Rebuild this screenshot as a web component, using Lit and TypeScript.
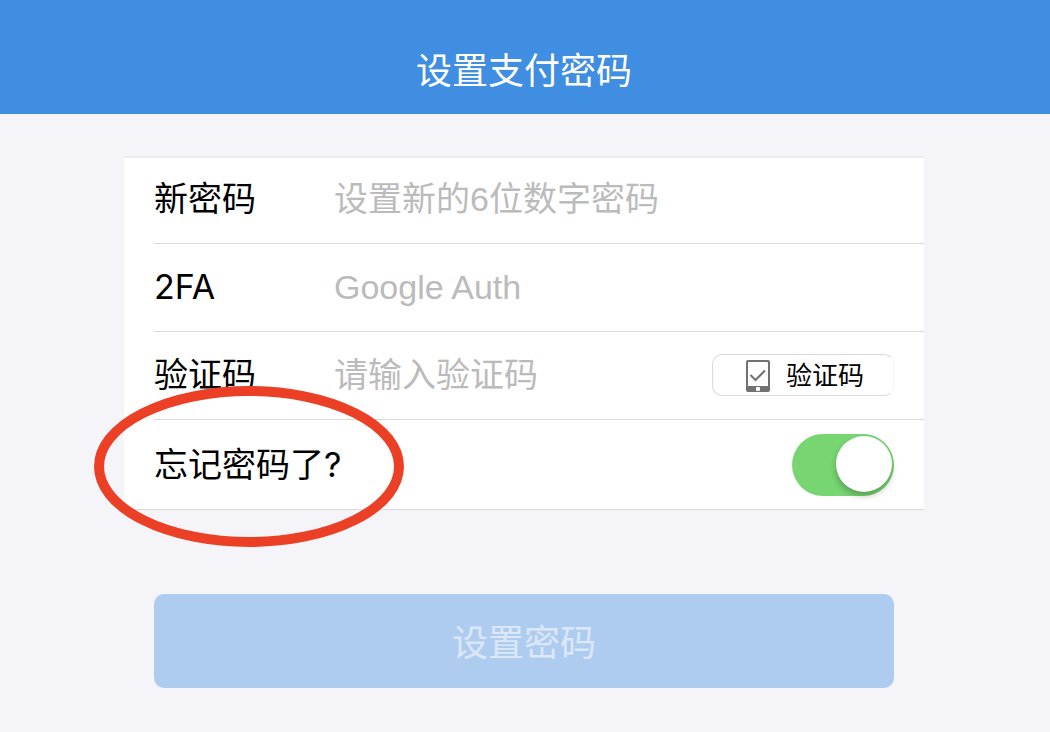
import { LitElement, html, css } from "lit";
import { customElement, state } from "lit/decorators.js";

@customElement("app-root")
export class AppRoot extends LitElement {
  @state() private forgot = true;

  static styles = css`
    :host {
      display: block;
      min-height: 100vh;
      background: #f4f4f9;
      color: #000;
      font-family: Inter, "Noto Sans CJK SC", sans-serif;
      font-size: 34px;
      line-height: 48px;
    }
    * {
      box-sizing: border-box;
    }
    .header {
      padding: 44px 2px 16px 0;
      background: #408ee1;
      color: #fff;
      text-align: center;
    }
    .title {
      margin: 0;
      font-size: 36px;
      font-weight: 400;
      line-height: 54px;
    }
    .page {
      padding: 42px 126px 44px 124px;
    }
    .card {
      border-top: 2px solid #ececee;
      border-bottom: 1px solid #d9d9d9;
      background: #fff;
    }
    .row {
      position: relative;
      display: flex;
      align-items: center;
      min-height: 88px;
      margin-left: 30px;
      padding: 0 30px 2px 0;
      border-bottom: 1px solid #d9d9d9;
    }
    .row:first-child {
      min-height: 86px;
      padding-bottom: 4px;
    }
    .row:last-child {
      justify-content: space-between;
      min-height: 89px;
      padding-bottom: 0;
      border-bottom: 0;
    }
    .label {
      flex: 0 0 180px;
    }
    .label.wide {
      flex: none;
    }
    .field {
      flex: 1;
      min-width: 0;
      height: 48px;
      padding: 0;
      border: 0;
      outline: 0;
      background: none;
      color: #000;
      font: 34px/48px "Liberation Sans", "Noto Sans CJK SC", sans-serif;
    }
    .field::placeholder {
      color: #bbb;
      opacity: 1;
    }
    .code {
      display: flex;
      align-items: center;
      justify-content: center;
      gap: 16px;
      width: 182px;
      height: 42px;
      padding: 2px 0 0 4px;
      border: 1px solid #d9d9d9;
      border-right-color: #f6f6f6;
      border-radius: 10px;
      background: #fff;
      color: #000;
      font: 26px/38px Inter, "Noto Sans CJK SC", sans-serif;
    }
    .switch {
      appearance: none;
      width: 102px;
      height: 62px;
      margin: 0;
      padding: 2px;
      border-radius: 31px;
      background: #ddd;
    }
    .switch:checked {
      background: #77d572;
    }
    .switch::before {
      content: "";
      display: block;
      width: 56px;
      height: 56px;
      border-radius: 50%;
      background: #fff;
      box-shadow: 0 4px 6px rgba(0, 0, 0, 0.25);
    }
    .switch:checked::before {
      margin-left: auto;
    }
    .ring {
      position: absolute;
      left: -60px;
      top: -34px;
      pointer-events: none;
    }
    .submit {
      display: block;
      width: calc(100% - 60px);
      height: 94px;
      margin: 84px 30px 0;
      padding: 4px 0 0;
      border: 0;
      border-radius: 10px;
      background: #aeccf0;
      color: #dce7f7;
      font: 36px/54px Inter, "Noto Sans CJK SC", sans-serif;
    }
  `;

  private toggle(e: Event) {
    this.forgot = (e.target as HTMLInputElement).checked;
  }

  render() {
    return html`
      <header class="header"><h1 class="title">设置支付密码</h1></header>
      <main class="page">
        <form @submit=${(e: Event) => e.preventDefault()}>
          <div class="card">
            <div class="row">
              <label class="label" for="password">新密码</label>
              <input class="field" id="password" type="password" placeholder="设置新的6位数字密码" />
            </div>
            <div class="row">
              <label class="label" for="auth">2FA</label>
              <input class="field" id="auth" type="text" placeholder="Google Auth" />
            </div>
            <div class="row">
              <label class="label" for="code">验证码</label>
              <input class="field" id="code" type="text" placeholder="请输入验证码" />
              <button class="code" type="button">
                <svg width="24" height="32" viewBox="0 0 24 32" aria-hidden="true">
                  <path fill="#717171" fill-rule="evenodd"
                    d="M2 0H22Q24 0 24 2V30Q24 32 22 32H2Q0 32 0 30V2Q0 0 2 0ZM3 2Q2 2 2 3V26H22V3Q22 2 21 2Z" />
                  <rect x="10" y="27" width="4" height="4" rx="1" fill="#fff" />
                  <path d="M4.5 15L9.5 20L19 10.500" fill="none" stroke="#717171" stroke-width="2" />
                </svg>
                <span>验证码</span>
              </button>
            </div>
            <div class="row">
              <label class="label wide" for="forgot">忘记密码了?</label>
              <input class="switch" id="forgot" type="checkbox" role="switch"
                .checked=${this.forgot} @change=${this.toggle} />
              <svg class="ring" width="310" height="161" viewBox="0 0 310 161" aria-hidden="true">
                <ellipse cx="155" cy="80.5" rx="150" ry="75.5" fill="none" stroke="#ec4026" stroke-width="10" />
              </svg>
            </div>
          </div>
          <button class="submit" type="submit">设置密码</button>
        </form>
      </main>
    `;
  }
}
